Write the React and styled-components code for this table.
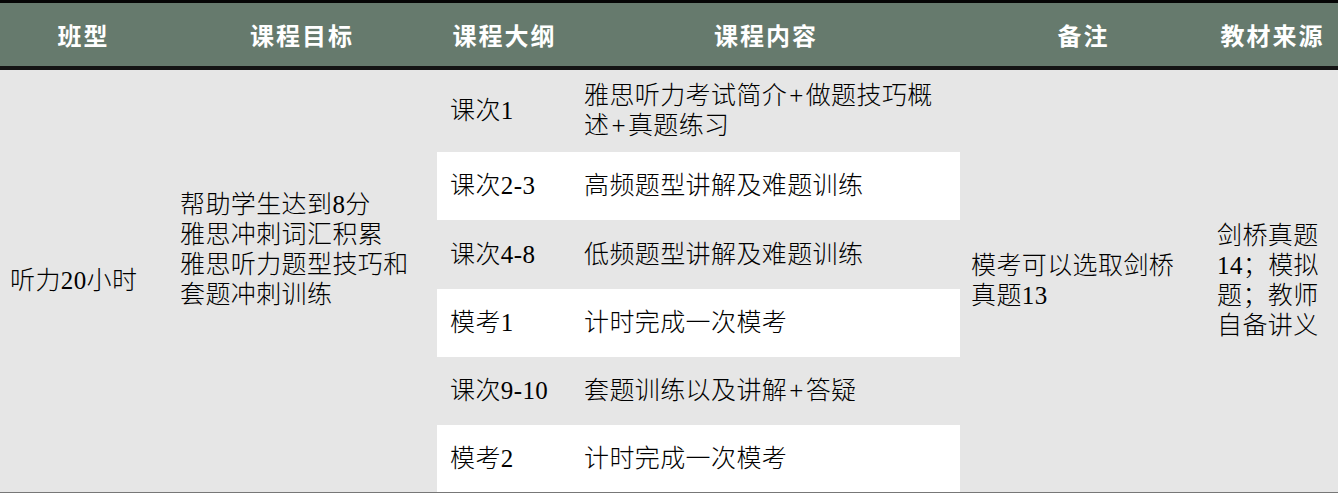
import React from 'react';
import styled, { createGlobalStyle } from 'styled-components';

const Global = createGlobalStyle`
  html, body { margin: 0; padding: 0; background: #e6e6e6; }
  body { font-family: "Liberation Serif", "Noto Sans CJK SC", serif; }
`;

const COLS = '165px 272px 133px 390px 245px 133px';

const Table = styled.div`
  width: 1338px;
  display: flex;
  flex-direction: column;
`;

const Header = styled.div`
  display: grid;
  grid-template-columns: ${COLS};
  height: 63px;
  background: #667a6d;
  border-top: 3px solid #050505;
  border-bottom: 4px solid #141414;
`;

const HeadCell = styled.div`
  display: flex;
  align-items: center;
  justify-content: center;
  color: #fff;
  font-weight: 700;
  font-size: 24px;
  letter-spacing: 2px;
  padding-left: 2px;
`;

const Body = styled.div`
  display: grid;
  grid-template-columns: ${COLS};
  grid-template-rows: 82px 68px 69px 68px 68px 67px;
  background: #e6e6e6;
  border-bottom: 1px solid #777;
  color: #000;
  font-size: 25px;
  font-weight: 300;
  line-height: 30px;
  letter-spacing: 0.4px;
`;

const SpanCell = styled.div`
  grid-column: ${(p) => p.$col};
  grid-row: 1 / -1;
  display: flex;
  align-items: center;
  padding-left: ${(p) => p.$pad}px;
  padding-bottom: ${(p) => p.$shift || 0}px;
`;

const RowCell = styled.div`
  grid-column: ${(p) => p.$col};
  grid-row: ${(p) => p.$row};
  display: flex;
  align-items: center;
  padding-left: ${(p) => p.$pad}px;
  background: ${(p) => (p.$white ? '#ffffff' : 'transparent')};
`;

const Plus = styled.span`
  padding: 0 2px;
`;

const headers = ['班型', '课程目标', '课程大纲', '课程内容', '备注', '教材来源'];

const sessions = [
  ['课次1', ['雅思听力考试简介+做题技巧概', '述+真题练习']],
  ['课次2-3', ['高频题型讲解及难题训练']],
  ['课次4-8', ['低频题型讲解及难题训练']],
  ['模考1', ['计时完成一次模考']],
  ['课次9-10', ['套题训练以及讲解+答疑']],
  ['模考2', ['计时完成一次模考']],
];

const withPlus = (text) =>
  text.split('+').map((part, i) => (
    <React.Fragment key={i}>
      {i > 0 && <Plus>+</Plus>}
      {part}
    </React.Fragment>
  ));

const Lines = ({ lines }) => (
  <div>
    {lines.map((l, i) => (
      <React.Fragment key={i}>
        {i > 0 && <br />}
        {withPlus(l)}
      </React.Fragment>
    ))}
  </div>
);

export default function App() {
  return (
    <>
      <Global />
      <Table>
        <Header>
          {headers.map((h) => (
            <HeadCell key={h}>{h}</HeadCell>
          ))}
        </Header>
        <Body>
          <SpanCell $col={1} $pad={10}>听力20小时</SpanCell>
          <SpanCell $col={2} $pad={15} $shift={62}>
            <Lines lines={['帮助学生达到8分', '雅思冲刺词汇积累', '雅思听力题型技巧和', '套题冲刺训练']} />
          </SpanCell>
          {sessions.map(([name, content], i) => (
            <React.Fragment key={i}>
              <RowCell $col={3} $row={i + 1} $pad={13} $white={i % 2 === 1}>
                {name}
              </RowCell>
              <RowCell $col={4} $row={i + 1} $pad={14} $white={i % 2 === 1}>
                <Lines lines={content} />
              </RowCell>
            </React.Fragment>
          ))}
          <SpanCell $col={5} $pad={11}>
            <Lines lines={['模考可以选取剑桥', '真题13']} />
          </SpanCell>
          <SpanCell $col={6} $pad={12}>
            <Lines lines={['剑桥真题', '14；模拟', '题；教师', '自备讲义']} />
          </SpanCell>
        </Body>
      </Table>
    </>
  );
}
